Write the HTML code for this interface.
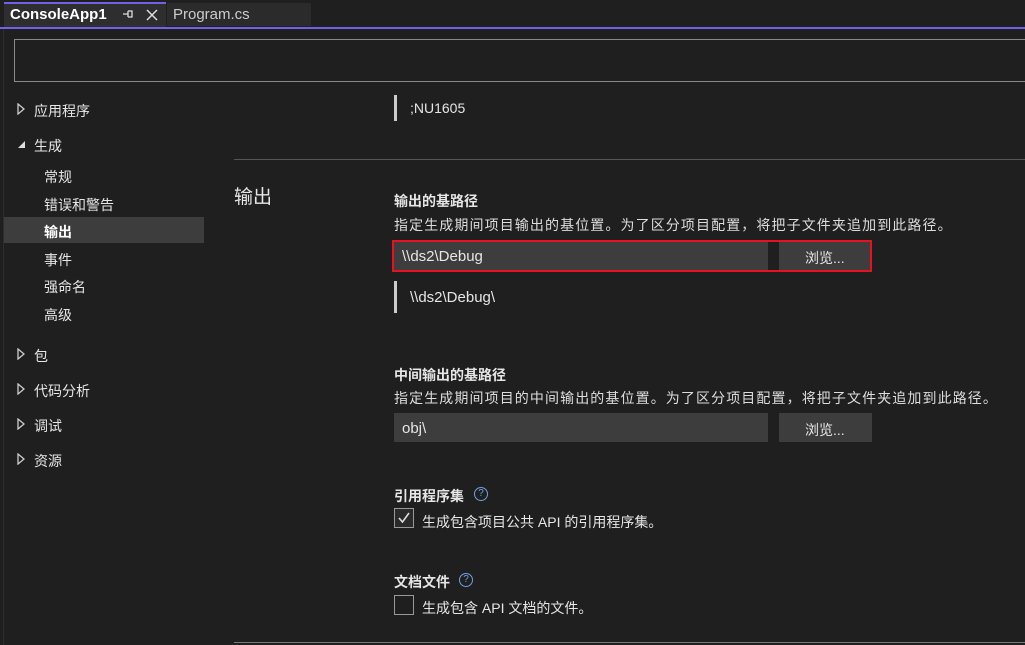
<!DOCTYPE html>
<html><head><meta charset="utf-8"><style>
*{margin:0;padding:0;box-sizing:border-box}
body{width:1025px;height:645px;background:#1f1f1f;color:#e6e6e6;font-family:"Liberation Sans","Noto Sans CJK SC",sans-serif;font-size:14px;position:relative;overflow:hidden}
.a{position:absolute;white-space:nowrap}
.d{font-size:14px;letter-spacing:1.1px;color:#ddd}
</style></head><body>
<div class="a" style="left:4px;top:2px;width:162px;height:25px;background:#2e2e2e;border-top:2px solid #7160e8"></div>
<div class="a" style="left:10px;top:6px;font-weight:bold;font-size:15px;color:#fff">ConsoleApp1</div>
<svg class="a" style="left:122px;top:9px" width="12" height="10"><path d="M1 5H6M6 2V8M6 2H10V8H6" stroke="#ddd" fill="none" stroke-width="1.3"/></svg>
<svg class="a" style="left:146px;top:9px" width="12" height="12"><path d="M1 1L11 11M11 1L1 11" stroke="#ddd" stroke-width="1.5"/></svg>
<div class="a" style="left:167px;top:3px;width:144px;height:23px;background:#2b2b2b"></div>
<div class="a" style="left:173px;top:6px;font-size:15px;color:#ccc">Program.cs</div>
<div class="a" style="left:0;top:27px;width:1025px;height:2px;background:#7160e8"></div>
<div class="a" style="left:3px;top:29px;width:1px;height:616px;background:#2d2d2d"></div>
<div class="a" style="left:14px;top:39px;width:1015px;height:43px;border:1px solid #8a8a8a"></div>

<svg class="a" style="left:17px;top:103px" width="8" height="12"><path d="M1 1L7 6L1 11Z" stroke="#ccc" fill="none" stroke-width="1.3"/></svg><div class="a" style="left:34px;top:101px">应用程序</div>
<svg class="a" style="left:17px;top:140px" width="9" height="9"><path d="M8 1V8H1Z" fill="#ddd"/></svg><div class="a" style="left:34px;top:136px">生成</div>
<div class="a" style="left:44px;top:167px">常规</div>
<div class="a" style="left:44px;top:195px">错误和警告</div>
<div class="a" style="left:4px;top:217px;width:200px;height:26px;background:#3d3d3d"></div>
<div class="a" style="left:44px;top:222px;font-weight:bold;color:#fff">输出</div>
<div class="a" style="left:44px;top:250px">事件</div>
<div class="a" style="left:44px;top:277px">强命名</div>
<div class="a" style="left:44px;top:305px">高级</div>
<svg class="a" style="left:17px;top:348px" width="8" height="12"><path d="M1 1L7 6L1 11Z" stroke="#ccc" fill="none" stroke-width="1.3"/></svg><div class="a" style="left:34px;top:346px">包</div>
<svg class="a" style="left:17px;top:383px" width="8" height="12"><path d="M1 1L7 6L1 11Z" stroke="#ccc" fill="none" stroke-width="1.3"/></svg><div class="a" style="left:34px;top:381px">代码分析</div>
<svg class="a" style="left:17px;top:418px" width="8" height="12"><path d="M1 1L7 6L1 11Z" stroke="#ccc" fill="none" stroke-width="1.3"/></svg><div class="a" style="left:34px;top:416px">调试</div>
<svg class="a" style="left:17px;top:453px" width="8" height="12"><path d="M1 1L7 6L1 11Z" stroke="#ccc" fill="none" stroke-width="1.3"/></svg><div class="a" style="left:34px;top:451px">资源</div>

<div class="a" style="left:394px;top:95px;width:3px;height:26px;background:#ccc"></div>
<div class="a" style="left:410px;top:100px">;NU1605</div>
<div class="a" style="left:234px;top:159px;width:791px;height:1px;background:#555"></div>
<div class="a" style="left:234px;top:182px;font-size:19px">输出</div>
<div class="a" style="left:394px;top:191px;font-weight:bold">输出的基路径</div>
<div class="a d" style="left:394px;top:215px">指定生成期间项目输出的基位置。为了区分项目配置，将把子文件夹追加到此路径。</div>
<div class="a" style="left:392px;top:240px;width:480px;height:32px;border:2px solid #e81123"></div>
<div class="a" style="left:394px;top:242px;width:374px;height:28px;background:#3d3d3d"></div>
<div class="a" style="left:779px;top:242px;width:91px;height:28px;background:#3d3d3d"></div>
<div class="a" style="left:402px;top:248px;font-size:15px">\\ds2\Debug</div>
<div class="a" style="left:805px;top:248px">浏览...</div>
<div class="a" style="left:394px;top:281px;width:3px;height:32px;background:#ccc"></div>
<div class="a" style="left:410px;top:289px;font-size:15px">\\ds2\Debug\</div>
<div class="a" style="left:394px;top:365px;font-weight:bold">中间输出的基路径</div>
<div class="a d" style="left:394px;top:388px">指定生成期间项目的中间输出的基位置。为了区分项目配置，将把子文件夹追加到此路径。</div>
<div class="a" style="left:394px;top:413px;width:374px;height:29px;background:#3d3d3d"></div>
<div class="a" style="left:779px;top:413px;width:93px;height:29px;background:#3d3d3d"></div>
<div class="a" style="left:402px;top:420px;font-size:15px">obj\</div>
<div class="a" style="left:805px;top:420px">浏览...</div>
<div class="a" style="left:394px;top:486px;font-weight:bold">引用程序集</div>
<div class="a" style="left:474px;top:487px;width:14px;height:14px;border:1px solid #6ea0e0;border-radius:50%;font-size:10px;text-align:center;line-height:12px;color:#6ea0e0">?</div>
<div class="a" style="left:394px;top:508px;width:20px;height:20px;border:1px solid #999;background:#2a2a2a"></div>
<svg class="a" style="left:397px;top:511px" width="14" height="14"><path d="M2 7L5.5 11L12 2" stroke="#ddd" fill="none" stroke-width="1.6"/></svg>
<div class="a" style="left:422px;top:512px">生成包含项目公共 API 的引用程序集。</div>
<div class="a" style="left:394px;top:572px;font-weight:bold">文档文件</div>
<div class="a" style="left:459px;top:573px;width:14px;height:14px;border:1px solid #6ea0e0;border-radius:50%;font-size:10px;text-align:center;line-height:12px;color:#6ea0e0">?</div>
<div class="a" style="left:394px;top:595px;width:20px;height:20px;border:1px solid #999"></div>
<div class="a" style="left:422px;top:598px">生成包含 API 文档的文件。</div>
<div class="a" style="left:234px;top:642px;width:791px;height:1px;background:#777"></div>
</body></html>
